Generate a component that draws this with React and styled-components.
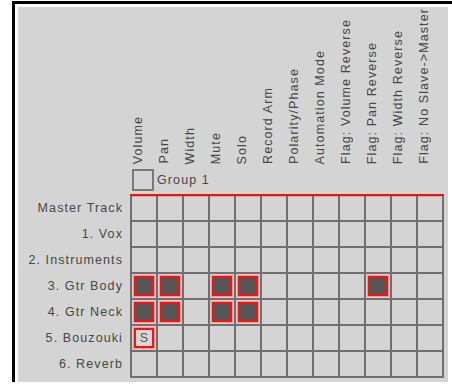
import React from "react";
import styled, { createGlobalStyle } from "styled-components";

const Global = createGlobalStyle`
  html, body { margin: 0; padding: 0; background: #ffffff; }
  body { font-family: "Liberation Sans", Arial, sans-serif; }
`;

const Window = styled.div`
  margin: 1px 0 0 12px;
  border-top: 3px solid #000;
  border-left: 3px solid #000;
  padding: 3px 0 0 3px;
  background: #fff;
`;

const Panel = styled.div`
  width: 430px;
  background: #d4d4d4;
  overflow: hidden;
  padding-bottom: 4px;
  font-family: "Liberation Sans", Arial, sans-serif;
  font-size: 12.5px;
  letter-spacing: 1.1px;
  color: #474747;
`;

const Header = styled.div`
  display: flex;
  padding-left: 112px;
  height: 160px;
`;

const HeaderCell = styled.div`
  width: 26px;
  height: 160px;
  flex: none;
  display: flex;
  align-items: flex-end;
  padding-left: 1px;
  box-sizing: border-box;
`;

const HeaderText = styled.span`
  writing-mode: vertical-rl;
  transform: rotate(180deg);
  white-space: nowrap;
  line-height: 15px;
  padding-top: 3px;
`;

const GroupRow = styled.div`
  display: flex;
  align-items: center;
  gap: 3px;
  margin-top: 2px;
  padding-left: 114px;
  height: 22px;
`;

const GroupBox = styled.div`
  width: 22px;
  height: 22px;
  box-sizing: border-box;
  border: 2px solid #7a7a7a;
`;

const Rule = styled.div`
  margin: 3px 0 0 112px;
  width: 314px;
  height: 2px;
  background: #e01818;
  box-shadow: 0 1px 0 rgba(240, 120, 120, 0.6);
`;

const Row = styled.div`
  display: flex;
  height: 26px;
`;

const Label = styled.div`
  width: 112px;
  flex: none;
  box-sizing: border-box;
  padding-right: 7px;
  text-align: right;
  line-height: 24px;
  white-space: nowrap;
`;

const Cell = styled.div`
  height: 26px;
  flex: none;
  box-sizing: border-box;
  border-left: 2px solid #707070;
  border-bottom: 2px solid #707070;
  border-right: ${(p) => (p.$last ? "2px solid #707070" : "none")};
  width: ${(p) => (p.$last ? "28px" : "26px")};
  display: flex;
  align-items: center;
  justify-content: flex-start;
  padding-left: 2px;
`;

const Mark = styled.div`
  width: 20px;
  height: 20px;
  box-sizing: border-box;
  border: 2px solid #ff1010;
  box-shadow: 0 0 0 1px rgba(245, 140, 140, 0.8);
  background: ${(p) => (p.$solo ? "#d8d8d8" : "#565656")};
  display: flex;
  align-items: center;
  justify-content: center;
  font-size: 12.5px;
  letter-spacing: 0;
  color: #555;
  line-height: 1;
`;

const columns = [
  "Volume",
  "Pan",
  "Width",
  "Mute",
  "Solo",
  "Record Arm",
  "Polarity/Phase",
  "Automation Mode",
  "Flag: Volume Reverse",
  "Flag: Pan Reverse",
  "Flag: Width Reverse",
  "Flag: No Slave->Master",
];

const rows = [
  { name: "Master Track", on: [] },
  { name: "1. Vox", on: [] },
  { name: "2. Instruments", on: [] },
  { name: "3. Gtr Body", on: [0, 1, 3, 4, 9] },
  { name: "4. Gtr Neck", on: [0, 1, 3, 4] },
  { name: "5. Bouzouki", on: [], solo: [0] },
  { name: "6. Reverb", on: [] },
];

export default function App() {
  return (
    <>
      <Global />
      <Window>
        <Panel>
          <Header>
            {columns.map((c) => (
              <HeaderCell key={c}>
                <HeaderText>{c}</HeaderText>
              </HeaderCell>
            ))}
          </Header>
          <GroupRow>
            <GroupBox />
            <span>Group 1</span>
          </GroupRow>
          <Rule />
          {rows.map((r) => (
            <Row key={r.name}>
              <Label>{r.name}</Label>
              {columns.map((c, i) => (
                <Cell key={c} $last={i === columns.length - 1}>
                  {r.on.includes(i) && <Mark />}
                  {r.solo && r.solo.includes(i) && <Mark $solo>S</Mark>}
                </Cell>
              ))}
            </Row>
          ))}
        </Panel>
      </Window>
    </>
  );
}
